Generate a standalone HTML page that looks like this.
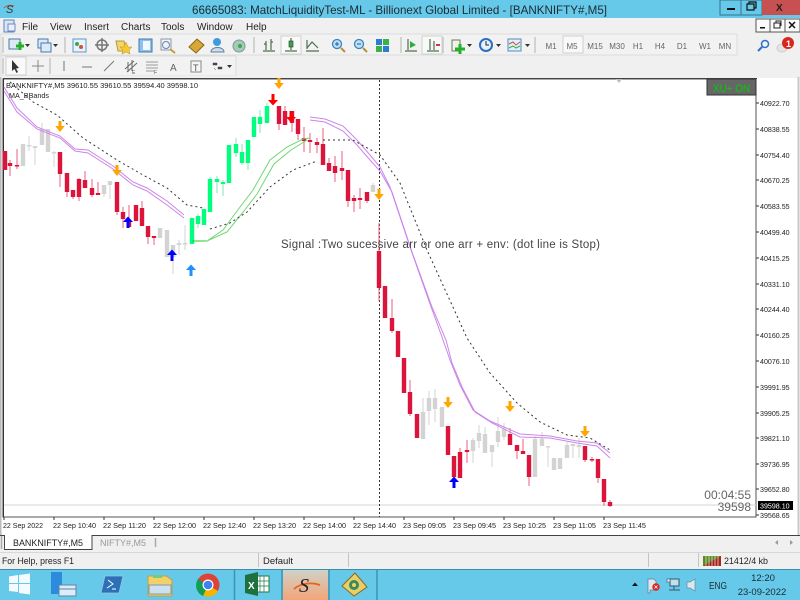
<!DOCTYPE html>
<html><head><meta charset="utf-8"><style>
html,body{margin:0;padding:0;width:800px;height:600px;overflow:hidden;background:#f0f0f0}
svg{display:block;filter:blur(.3px)}
text{font-family:"Liberation Sans",sans-serif}
.m{font-size:10px;fill:#222}
.a{font-size:7.1px;fill:#222}
.t{font-size:7.5px;fill:#222}
.tf{font-size:8px;fill:#666;text-anchor:middle}
</style></head><body>
<svg width="800" height="600" viewBox="0 0 800 600" xmlns="http://www.w3.org/2000/svg">
<defs>
<g id="od"><path d="M-1.500 -6H1.500V-1H4.800L0 5L-4.800 -1H-1.500Z" fill="#ffa500"/></g>
<g id="bu"><path d="M-1.500 6H1.500V0H5L0 -5.500L-5 0H-1.500Z" fill="#0000ff"/></g>
<g id="lu"><path d="M-1.500 6H1.500V0H5L0 -5.500L-5 0H-1.500Z" fill="#1e90ff"/></g>
<g id="rd"><path d="M-1.500 -6H1.500V0H5L0 5.500L-5 0H-1.500Z" fill="#ff0000"/></g>
</defs>
<rect width="800" height="600" fill="#f0f0f0"/>
<!-- title bar -->
<rect width="800" height="18" fill="#66c9ea"/>
<path d="M4 8C7 5 11 5 14 6" stroke="#c8541e" stroke-width="1" fill="none"/>
<text x="6" y="13" font-size="11" font-style="italic" fill="#333">S</text>
<text x="192" y="14" font-size="12" fill="#1c2b33" textLength="415" lengthAdjust="spacingAndGlyphs">66665083: MatchLiquidityTest-ML - Billionext Global Limited - [BANKNIFTY#,M5]</text>
<rect x="720" y="0" width="21" height="15" fill="#66c9ea" stroke="#35718a"/>
<rect x="741" y="0" width="21" height="15" fill="#66c9ea" stroke="#35718a"/>
<rect x="762" y="0" width="38" height="15" fill="#c75050"/>
<rect x="727" y="8" width="8" height="2" fill="#111"/>
<path d="M747 4H754V10H747ZM749 4V2H756V8H754" fill="none" stroke="#111" stroke-width="1.2"/>
<text x="776" y="11" font-size="10" font-weight="bold" fill="#222">X</text>
<!-- menu -->
<rect x="4" y="20" width="10" height="12" fill="#dbe6f4" stroke="#5c86bb"/>
<rect x="8" y="24" width="7" height="7" fill="#eef" stroke="#6a8fc0"/>
<text class="m" x="22" y="30">File</text><text class="m" x="50" y="30">View</text><text class="m" x="84" y="30">Insert</text><text class="m" x="121" y="30">Charts</text><text class="m" x="161" y="30">Tools</text><text class="m" x="197" y="30">Window</text><text class="m" x="246" y="30">Help</text>
<g fill="#fafafa" stroke="#555"><rect x="756" y="19" width="14" height="13"/><rect x="770" y="19" width="15" height="13"/><rect x="785" y="19" width="15" height="13"/></g>
<rect x="760" y="27" width="5" height="1.5" fill="#111"/>
<path d="M774 23H780V28H774ZM776 23V21H781V26" fill="none" stroke="#222"/>
<path d="M789 22L795 28M795 22L789 28" stroke="#111" stroke-width="1.5"/>
<!-- toolbars -->
<rect x="1" y="34" width="736" height="21" fill="#f2f2f2" stroke="#dcdcdc"/>
<rect x="1" y="56" width="235" height="20" fill="#f2f2f2" stroke="#dcdcdc"/>
<path d="M3 37V53M65 37V53M254 37V53M401 37V53M443 37V53M535 37V53M3 58V74M50 58V74" stroke="#c8c8c8" stroke-width="1.5"/>
<g fill="#333"><path d="M25 44h5l-2.500 3zM53 44h5l-2.500 3zM467 44h5l-2.500 3zM496 44h5l-2.500 3zM525 44h5l-2.500 3zM227 65h5l-2.500 3z"/></g>
<!-- row1 icons -->
<rect x="9" y="39" width="11" height="10" fill="#dce9f7" stroke="#4878a8"/><path d="M16 46H24M20 42V50" stroke="#22b22a" stroke-width="3"/>
<rect x="38" y="39" width="10" height="9" fill="#dce9f7" stroke="#4878a8"/><rect x="41" y="43" width="10" height="9" fill="#dce9f7" stroke="#4878a8"/>
<rect x="73" y="39" width="13" height="13" fill="#e8f2fb" stroke="#5c95cc"/><circle cx="77" cy="44" r="2" fill="#3aa84a"/><circle cx="81" cy="47" r="2" fill="#d2503a"/>
<circle cx="102" cy="45" r="5" fill="none" stroke="#777" stroke-width="1.500"/><path d="M102 38V52M95 45H109" stroke="#777" stroke-width="1.500"/>
<path d="M116 41H124L126 51H118Z" fill="#f4d46c" stroke="#b89a3a"/><path d="M126 42L128 47L132 47L129 50L130 54L126 52L122 54L123 50L120 47L124 47Z" fill="#f6c92f" stroke="#b8902a" stroke-width=".5"/>
<rect x="139" y="39" width="13" height="13" fill="#8fc0ec" stroke="#3d78b3"/><rect x="143" y="41" width="7" height="9" fill="#f4f8fc"/>
<rect x="161" y="39" width="10" height="11" fill="#eef2f6" stroke="#8b98a8"/><circle cx="166" cy="45" r="3.500" fill="none" stroke="#6a88a8"/><path d="M170 49L175 53" stroke="#c89a3a" stroke-width="2"/>
<path d="M189 47L197 39L204 45L196 53Z" fill="#d9a733" stroke="#8a641a"/>
<circle cx="217" cy="42" r="4" fill="#3f9be0"/><path d="M211 52C211 46 224 46 224 52Z" fill="#cfdde9" stroke="#5a7ea0"/>
<circle cx="239" cy="46" r="6" fill="#a8c8b8" stroke="#7a9aa0"/><circle cx="240" cy="46" r="2" fill="#3aaa4a"/>
<g fill="none" stroke="#4e6e4e" stroke-width="1.200"><path d="M263 51H275M266 41V50M271 39V50M264 44H266M271 42H273"/></g>
<rect x="281" y="36" width="20" height="18" fill="#f9f9f9" stroke="#d0d0d0"/>
<path d="M285 51H297M291 38V50" stroke="#4e6e4e" stroke-width="1.200"/><rect x="289" y="41" width="4" height="6" fill="#36a84a" stroke="#333" stroke-width=".6"/>
<path d="M306 51H319M307 49V40M307 48L312 42L318 48" fill="none" stroke="#4e6e4e" stroke-width="1.200"/>
<circle cx="337" cy="44" r="4.500" fill="#bfe0f5" stroke="#3a84c0" stroke-width="1.300"/><path d="M341 48L345 52" stroke="#b8903a" stroke-width="2"/><path d="M335 44H339M337 42V46" stroke="#245d9a"/>
<circle cx="359" cy="44" r="4.500" fill="#bfe0f5" stroke="#3a84c0" stroke-width="1.300"/><path d="M363 48L367 52" stroke="#b8903a" stroke-width="2"/><path d="M357 44H361" stroke="#245d9a"/>
<rect x="376" y="39" width="6" height="6" fill="#2a7dd0"/><rect x="383" y="39" width="6" height="6" fill="#3ab24a"/><rect x="376" y="46" width="6" height="6" fill="#3ab24a"/><rect x="383" y="46" width="6" height="6" fill="#2a7dd0"/>
<path d="M405 51H417M408 39V50" stroke="#4e6e4e" stroke-width="1.200"/><path d="M410 41L416 45L410 48Z" fill="#2fae3f"/>
<rect x="422" y="36" width="20" height="18" fill="#f9f9f9" stroke="#d0d0d0"/>
<path d="M427 51H439M430 39V50M434 41V50" stroke="#4e6e4e" stroke-width="1.200"/><path d="M436 45H440" stroke="#d23a3a" stroke-width="2"/>
<path d="M452 40H460V51H452Z" fill="#eef2e8" stroke="#6a7a5a"/><path d="M455 49H465M460 44V54" stroke="#22b22a" stroke-width="3"/>
<circle cx="486" cy="45" r="6" fill="#e8f2fb" stroke="#2b70bf" stroke-width="2"/><path d="M486 41V45H489" stroke="#223" fill="none"/>
<rect x="508" y="39" width="13" height="12" fill="#e2eef9" stroke="#4f8cc5"/><path d="M509 44L513 42L516 45L520 42" stroke="#d2503a" fill="none"/><path d="M509 48L513 46L516 48L520 46" stroke="#3aaa4a" fill="none"/>
<!-- timeframes -->
<rect x="563" y="36" width="20" height="17" fill="#f9f9f9" stroke="#d0d0d0"/>
<g class="tfg"><text class="tf" x="551" y="49">M1</text><text class="tf" x="572" y="49">M5</text><text class="tf" x="595" y="49">M15</text><text class="tf" x="617" y="49">M30</text><text class="tf" x="638" y="49">H1</text><text class="tf" x="660" y="49">H4</text><text class="tf" x="682" y="49">D1</text><text class="tf" x="705" y="49">W1</text><text class="tf" x="725" y="49">MN</text></g>
<circle cx="765" cy="44" r="3.500" fill="none" stroke="#2a70c8" stroke-width="1.500"/><path d="M762 47L758 51" stroke="#2a70c8" stroke-width="2"/>
<ellipse cx="782" cy="48" rx="5" ry="4" fill="#e4e4e4" stroke="#cfcfcf"/>
<circle cx="788" cy="43" r="6" fill="#d8261c"/><text x="786" y="47" font-size="9" font-weight="bold" fill="#fff">1</text>
<!-- row2 icons -->
<rect x="6" y="57" width="20" height="18" fill="#f9f9f9" stroke="#d0d0d0"/>
<path d="M12 60V71L14.500 69L16.500 73L18 72L16 68.500L19 68Z" fill="#333"/>
<path d="M38 60V72M32 66H44" stroke="#888"/>
<path d="M64 61V71" stroke="#777"/><path d="M82 67H92" stroke="#777"/><path d="M104 71L114 61" stroke="#777"/>
<path d="M125 69L134 61M127 72L137 63M128 62V72M132 60V71" stroke="#666" fill="none"/><text x="132" y="74" font-size="5" fill="#555">E</text>
<path d="M146 62H158M146 65H158M146 68H158M146 71H154" stroke="#999"/><text x="154" y="74" font-size="5" fill="#555">F</text>
<text x="170" y="71" font-size="10" fill="#666">A</text>
<rect x="191" y="61" width="10" height="11" fill="#f6f6f6" stroke="#888"/><text x="193" y="71" font-size="9" fill="#555">T</text>
<path d="M213 63H217V65H213ZM218 67H222V69H218ZM214 68L216 70" fill="#444" stroke="#444" stroke-width=".5"/>
<!-- chart -->
<rect x="3" y="79" width="753" height="438" fill="#fff"/>
<rect x="756" y="77" width="44" height="458" fill="#fff"/>
<rect x="0" y="517" width="800" height="18" fill="#fff"/>
<rect x="0" y="76" width="800" height="2" fill="#f0f0f0"/>
<path d="M0 77V535" stroke="#bbb" stroke-width="3"/>
<path d="M798.500 77V535" stroke="#c8c8c8" stroke-width="2"/>
<path d="M3 79H756V517H3Z" fill="none" stroke="#555" stroke-width="1"/>
<path d="M3.500 79V517" stroke="#333"/><path d="M3 78.500H757" stroke="#444"/>
<path d="M616 79H622L619 83Z" fill="#bbb"/>
<path d="M4 505H756" stroke="#d4d4d4"/>
<path d="M379.500 80V517" stroke="#333" stroke-dasharray="2 2"/>
<!-- wicks -->
<path fill="none" stroke="#d3d3d3" stroke-width="1" d="M29 136V151M35 146V165M42 123V145M54 151V167M104 185V197M110 181V199M160 228V238M173 245V274M179 240V255M185 225V250M373 183V192M423 398V412M429 391V425M435 389V422M442 407V427M473 438V463M479 425V448M485 427V453M492 445V467M498 417V447M504 423V440M535 436V477M542 432V446M548 446V467M567 442V458M573 444V458M579 438V458"/>
<path fill="none" stroke="#e8607f" stroke-width="1" d="M10 160V176M17 149V169M60 152V187M67 173V197M73 190V199M79 178V201M85 171V188M92 179V197M98 182V195M117 182V215M123 207V228M129 205V227M142 201V226M148 226V244M154 236V245M279 106V130M285 106V125M292 111V132M298 119V140M304 127V152M310 133V153M317 138V153M323 128V165M329 158V171M335 156V182M342 151V180M348 170V207M354 195V212M360 188V209M367 192V203M379 223V301M392 299V333M410 380V416M454 456V477M460 448V478M467 440V463M510 428V445M517 445V459M523 439V454M529 455V486M585 446V462M592 457V462M598 459V483M604 479V506M610 500V507"/>
<path fill="none" stroke="#7fe8b0" stroke-width="1" d="M198 214V228M210 177V212M217 176V193M223 180V196M229 145V183M236 138V157M242 144V165M248 140V170M260 110V133M267 103V123"/>
<!-- bodies -->
<g fill="none" stroke-width="4.400">
<path stroke="#d3d3d3" d="M23 144V166M29 145V146.500M35 146V148M42 129V145M48 129V152M54 152V153.500M104 185V194M110 181V185M160 228V238M167 230V257M173 245V257M179 243V245M185 243V244.500M373 185V192M423 412V439M429 398V411M435 398V409M442 407V427M473 440V451M479 433V441M485 434V453M492 445V452M498 431V442M504 429V437M535 439V477M542 439V446M548 446V447.500M554 458V470M560 458V469M567 445V458M573 444V446M579 445V447"/>
<path stroke="#dc143c" d="M5 151V170M10 163V166M17 165V166.500M60 152V174M67 173V192M73 190V197M79 179V197M85 180V188M92 188V195M98 193V195M117 182V212M123 212V219M129 220V227M136 205V221M142 208V226M148 226V237M154 236V238M279 106V124M285 111V125M292 111V123M298 119V134M304 138V141M310 140V142M317 142V145M323 144V165M329 163V171M335 166V173M342 168V171M348 170V201M354 198V201M360 198V200M367 192V201M379 251V288M385 286V318M392 318V331M398 331V357M404 358V393M410 392V414M417 414V438M448 426V455M454 456V477M460 452V478M467 450V452M510 434V445M517 445V451M523 451V454M529 455V477M585 446V460M592 459V460.500M598 459V478M604 479V502M610 502V506"/>
<path stroke="#00ff7f" d="M192 218V244M198 216V224M204 209V225M210 179V212M217 179V182M223 182V184M229 145V183M236 144V153M242 152V163M248 140V163M254 117V137M260 117V124M267 106V123"/>
</g>
<!-- lines -->
<g fill="none" stroke="#cb86e8" stroke-width="1">
<path d="M4 87L17 108L37 127L60 136L75 149L88 150L113 166L133 182L147 188L167 201L184 215"/>
<path d="M4 91L17 112L37 129L60 138L75 151L88 153L113 169L133 185L147 191L167 205L184 218"/>
<path d="M310 117L325 119L343 126L357 140L370 155L380 167L390 187L410 247L430 304L442 337L450 360L460 385L473 410L490 421L520 434L550 436L577 441L597 443L610 453"/>
<path d="M310 120L325 122L343 131L357 145L370 160L380 171L392 192L412 252L432 307L446 340L452 363L462 387L475 412L492 423L520 437L550 438L577 443L597 446L610 458"/>
</g>
<g fill="none" stroke="#6fd86f" stroke-width="1">
<path d="M192 241H207L223 230L240 207L253 190L270 160L287 147L303 139L310 138"/>
<path d="M207 241L227 232L244 211L257 194L274 164L291 150L307 140"/>
</g>
<path d="M192 241H206" stroke="#22c822" stroke-width="1"/>
<g fill="none" stroke="#333" stroke-width="1" stroke-dasharray="2 3">
<path d="M10 82L33 102L57 115L83 138L117 160L143 175L167 188L187 205L203 208"/>
<path d="M210 229L230 223L247 212L270 187L293 170L317 161"/>
<path d="M323 140H353L380 155L400 183L427 250L467 338L490 373L517 403L540 422L567 435L590 438L610 450"/>
</g>
<!-- arrows -->
<use href="#od" x="60" y="127"/><use href="#od" x="117" y="171"/><use href="#od" x="279" y="84"/><use href="#od" x="379" y="195"/><use href="#od" x="448" y="403"/><use href="#od" x="510" y="407"/><use href="#od" x="585" y="432"/>
<use href="#bu" x="128" y="222"/><use href="#bu" x="172" y="255"/><use href="#bu" x="454" y="482"/>
<use href="#lu" x="191" y="270"/>
<use href="#rd" x="273" y="100"/><use href="#rd" x="291" y="117"/>
<!-- chart text -->
<text x="6" y="88" font-size="7.500" fill="#222" textLength="192" lengthAdjust="spacingAndGlyphs">BANKNIFTY#,M5  39610.55 39610.55 39594.40 39598.10</text>
<text x="9" y="98" font-size="7.500" fill="#222" textLength="40" lengthAdjust="spacingAndGlyphs">MA_BBands</text>
<text x="281" y="248" font-size="11.500" fill="#444" textLength="319" lengthAdjust="spacing">Signal  :Two sucessive arr or one arr + env: (dot line is Stop)</text>
<rect x="707" y="79" width="49" height="16" fill="#666" stroke="#333"/>
<text x="713" y="92" font-size="11" fill="#00d000" textLength="37" lengthAdjust="spacingAndGlyphs">XU+ ON</text>
<text x="751" y="499" font-size="12" fill="#666" text-anchor="end">00:04:55</text>
<text x="751" y="511" font-size="12" fill="#666" text-anchor="end">39598</text>
<!-- price axis -->
<path d="M756 103h3M756 129h3M756 155h3M756 180h3M756 206h3M756 232h3M756 258h3M756 284h3M756 309h3M756 335h3M756 361h3M756 387h3M756 413h3M756 438h3M756 464h3M756 489h3M756 515h3" stroke="#333"/>
<g><text class="a" x="760" y="106">40922.70</text><text class="a" x="760" y="132">40838.55</text><text class="a" x="760" y="158">40754.40</text><text class="a" x="760" y="183">40670.25</text><text class="a" x="760" y="209">40583.55</text><text class="a" x="760" y="235">40499.40</text><text class="a" x="760" y="261">40415.25</text><text class="a" x="760" y="287">40331.10</text><text class="a" x="760" y="312">40244.40</text><text class="a" x="760" y="338">40160.25</text><text class="a" x="760" y="364">40076.10</text><text class="a" x="760" y="390">39991.95</text><text class="a" x="760" y="416">39905.25</text><text class="a" x="760" y="441">39821.10</text><text class="a" x="760" y="467">39736.95</text><text class="a" x="760" y="492">39652.80</text><text class="a" x="760" y="518">39568.65</text></g>
<rect x="758" y="501" width="35" height="9" fill="#000"/><text x="760" y="508.500" font-size="7.100" fill="#fff">39598.10</text>
<!-- time axis -->
<path d="M4 517v3M54 517v3M104 517v3M154 517v3M204 517v3M254 517v3M304 517v3M354 517v3M404 517v3M454 517v3M504 517v3M554 517v3M604 517v3" stroke="#333"/>
<g><text class="t" x="3" y="528" textLength="40" lengthAdjust="spacingAndGlyphs">22 Sep 2022</text><text class="t" x="53" y="528" textLength="43" lengthAdjust="spacingAndGlyphs">22 Sep 10:40</text><text class="t" x="103" y="528" textLength="43" lengthAdjust="spacingAndGlyphs">22 Sep 11:20</text><text class="t" x="153" y="528" textLength="43" lengthAdjust="spacingAndGlyphs">22 Sep 12:00</text><text class="t" x="203" y="528" textLength="43" lengthAdjust="spacingAndGlyphs">22 Sep 12:40</text><text class="t" x="253" y="528" textLength="43" lengthAdjust="spacingAndGlyphs">22 Sep 13:20</text><text class="t" x="303" y="528" textLength="43" lengthAdjust="spacingAndGlyphs">22 Sep 14:00</text><text class="t" x="353" y="528" textLength="43" lengthAdjust="spacingAndGlyphs">22 Sep 14:40</text><text class="t" x="403" y="528" textLength="43" lengthAdjust="spacingAndGlyphs">23 Sep 09:05</text><text class="t" x="453" y="528" textLength="43" lengthAdjust="spacingAndGlyphs">23 Sep 09:45</text><text class="t" x="503" y="528" textLength="43" lengthAdjust="spacingAndGlyphs">23 Sep 10:25</text><text class="t" x="553" y="528" textLength="43" lengthAdjust="spacingAndGlyphs">23 Sep 11:05</text><text class="t" x="603" y="528" textLength="43" lengthAdjust="spacingAndGlyphs">23 Sep 11:45</text></g>
<!-- tabs -->
<rect x="0" y="535" width="800" height="16" fill="#f0f0f0"/>
<path d="M92 535.500H800" stroke="#444"/>
<path d="M0 535.500H4" stroke="#444"/>
<path d="M4.500 535V549.500H92V535" fill="#fff" stroke="#444"/>
<text x="13" y="546" font-size="9.500" fill="#222" textLength="70" lengthAdjust="spacingAndGlyphs">BANKNIFTY#,M5</text>
<text x="100" y="546" font-size="9.500" fill="#999" textLength="46" lengthAdjust="spacingAndGlyphs">NIFTY#,M5</text>
<path d="M155.500 538V547M1.500 536V549" stroke="#aaa" stroke-width="1.500"/>
<path d="M778 540V545L775 542.500ZM790 540V545L793 542.500Z" fill="#999"/>
<!-- status -->
<rect x="0" y="551" width="800" height="18" fill="#f0f0f0"/>
<path d="M0 552.500H800" stroke="#d8d8d8"/>
<path d="M258.500 553V567M348.500 553V567M648.500 553V567M698.500 553V567" stroke="#c4c4c4"/>
<text x="2" y="564" font-size="9.500" fill="#222" textLength="72" lengthAdjust="spacingAndGlyphs">For Help, press F1</text>
<text x="263" y="564" font-size="9.500" fill="#222" textLength="30" lengthAdjust="spacingAndGlyphs">Default</text>
<path d="M703 556H721V566H703Z" fill="#5d8a1e"/><path d="M703 566L721 556V566Z" fill="#a8241c"/>
<path d="M706 556V566M709 556V566M712 556V566M715 556V566M718 556V566" stroke="#e8e8e8" stroke-width=".7"/>
<text x="724" y="564" font-size="9.500" fill="#222" textLength="44" lengthAdjust="spacingAndGlyphs">21412/4 kb</text>
<!-- taskbar -->
<rect x="0" y="569" width="800" height="31" fill="#66c9ea"/>
<path d="M0 569.500H800" stroke="#3e8cab"/>
<path d="M234.500 570V600M282 570V600M329 570V600M377 570V600" stroke="#3f92b2" stroke-width="1.500"/>
<path d="M9 576.500L18 575V583H9ZM19 575L30 573.500V583H19ZM9 584H18V592L9 591ZM19 584H30V594.500L19 593Z" fill="#fff" opacity=".92"/>
<rect x="51" y="572" width="11" height="22" fill="#2c8bdc"/><rect x="59" y="585" width="17" height="11" fill="#dcecf8" stroke="#5c86a8"/><path d="M59 589H76" stroke="#5c86a8"/>
<path d="M105 576H123L119 593H101Z" fill="#2c71b8" stroke="#9fc4e0" stroke-width=".7"/><path d="M108 580L113 584L107 588M112 589H116" stroke="#fff" fill="none"/>
<path d="M148 576H166L172 580V596H148Z" fill="#f2d06a" stroke="#c0a040"/><rect x="149" y="585" width="22" height="9" fill="#cde0ee" stroke="#7d9ab0"/><rect x="153" y="575" width="9" height="3" fill="#7ac87a"/>
<circle cx="208" cy="585" r="11.500" fill="#db4437"/><path d="M208 585L218 591A11.500 11.500 0 0 1 203 595.500Z" fill="#f4b400"/><path d="M208 585L203 596A11.500 11.500 0 0 1 198 579Z" fill="#0f9d58"/><circle cx="208" cy="585" r="5.500" fill="#fff"/><circle cx="208" cy="585" r="4.300" fill="#3f82ee"/>
<rect x="255" y="576" width="14" height="16" fill="#fff" stroke="#1f7a46"/><path d="M260 576V592M264 576V592M255 581H269M255 586H269" stroke="#1f7a46" stroke-width=".7"/><path d="M245 575L258 572V596L245 593Z" fill="#1f6f3f"/><text x="248" y="589" font-size="10" font-weight="bold" fill="#fff">X</text>
<defs><linearGradient id="pg" x1="0" y1="0" x2="0" y2="1"><stop offset="0" stop-color="#cfd2c8"/><stop offset="1" stop-color="#f4a478"/></linearGradient></defs>
<rect x="283" y="570" width="45" height="30" fill="url(#pg)"/>
<path d="M294 589C301 583 312 582 320 585" stroke="#e8641a" stroke-width="1.800" fill="none"/>
<text x="299" y="592" font-size="20" font-style="italic" fill="#222" style="font-family:'Liberation Serif',serif">S</text>
<path d="M342 586L355 573L367 587L354 596Z" fill="#e8cf6a" stroke="#8a6a1a"/><circle cx="354" cy="585" r="5" fill="#3a8a5a"/><circle cx="354" cy="585" r="2" fill="#f2d46a"/>
<!-- tray -->
<path d="M632 586L635 582.500L638 586Z" fill="#111"/>
<path d="M648 579H654L656 581V590H650V593H648Z" fill="#dde8ee" stroke="#5c7c8c" stroke-width=".7"/><circle cx="656" cy="587" r="3.700" fill="#d8261c"/><path d="M654.500 585.500L657.500 588.500M657.500 585.500L654.500 588.500" stroke="#fff" stroke-width=".8"/>
<rect x="670" y="579" width="9" height="7" fill="#bfe0ec" stroke="#35566a"/><rect x="667" y="579" width="3" height="3" fill="#eef" stroke="#35566a" stroke-width=".6"/><path d="M674 586V590M669 590H680" stroke="#35566a"/>
<path d="M687 582H690L695 579V591L690 588H687Z" fill="#dce8ee" stroke="#6a8a9a" stroke-width=".7"/>
<text x="709" y="589" font-size="10" fill="#1c2b33" textLength="18" lengthAdjust="spacingAndGlyphs">ENG</text>
<text x="763" y="581" font-size="9.500" fill="#1c2b33" text-anchor="middle">12:20</text>
<text x="762" y="595" font-size="9.500" fill="#1c2b33" text-anchor="middle">23-09-2022</text>
</svg>
</body></html>
